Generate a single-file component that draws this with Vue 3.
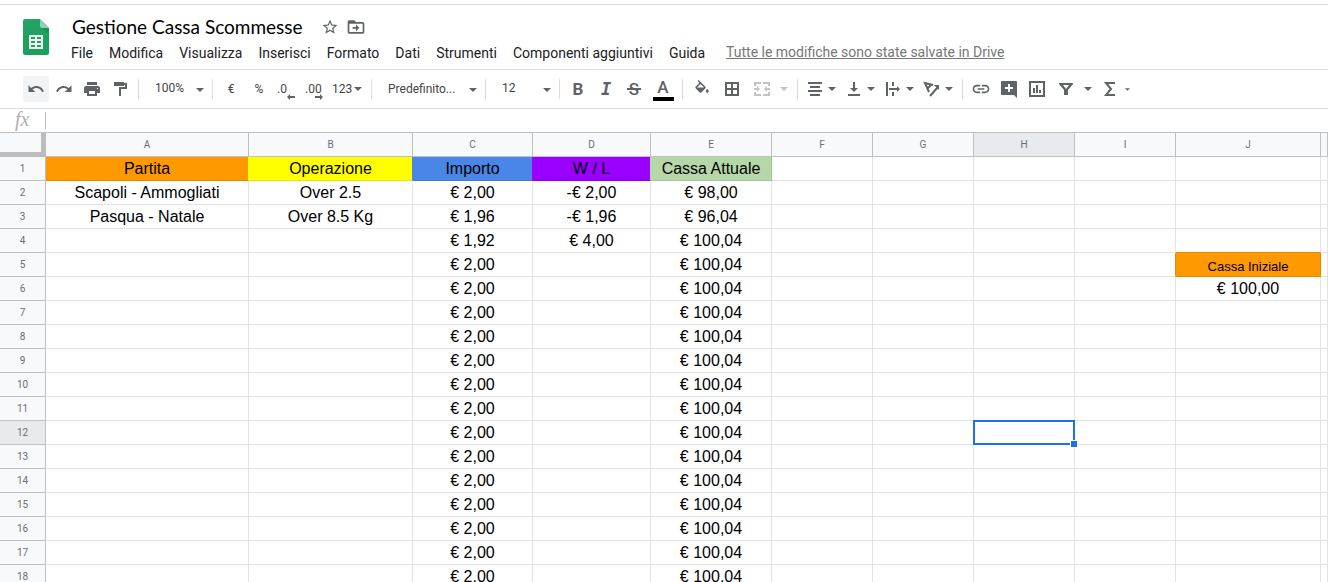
<script setup>
import { ref } from 'vue'

const title = ref('Gestione Cassa Scommesse')
const formula = ref('')
const menus = ['File', 'Modifica', 'Visualizza', 'Inserisci', 'Formato', 'Dati', 'Strumenti', 'Componenti aggiuntivi', 'Guida']
const columns = ['A', 'B', 'C', 'D', 'E', 'F', 'G', 'H', 'I', 'J', 'K']

const content = {
  A1: 'Partita', B1: 'Operazione', C1: 'Importo', D1: 'W / L', E1: 'Cassa Attuale',
  A2: 'Scapoli - Ammogliati', B2: 'Over 2.5', C2: '€ 2,00', D2: '-€ 2,00', E2: '€ 98,00',
  A3: 'Pasqua - Natale', B3: 'Over 8.5 Kg', C3: '€ 1,96', D3: '-€ 1,96', E3: '€ 96,04',
  C4: '€ 1,92', D4: '€ 4,00', E4: '€ 100,04',
  J5: 'Cassa Iniziale', J6: '€ 100,00'
}
for (let r = 5; r <= 18; r++) {
  content['C' + r] = '€ 2,00'
  content['E' + r] = '€ 100,04'
}

const fills = { A1: 'orange', B1: 'yellow', C1: 'blue', D1: 'violet', E1: 'green', J5: 'orange small boxed', J4: 'above-box', I5: 'beside-box' }
const selectedColumn = 'H'
const selectedRow = 12
</script>

<template>
  <div class="app">
    <header class="top">
      <svg class="logo" viewBox="0 0 26 36" aria-hidden="true">
        <defs>
          <linearGradient id="sheet" x1="0" y1="0" x2="0" y2="1">
            <stop offset="0" stop-color="#21a465" />
            <stop offset="1" stop-color="#1b9f5c" />
          </linearGradient>
        </defs>
        <path fill="url(#sheet)" d="M2 0h15l9 9v25a2 2 0 0 1-2 2H2a2 2 0 0 1-2-2V2a2 2 0 0 1 2-2z" />
        <path fill="#8ed1b1" d="M17 0l9 9h-7a2 2 0 0 1-2-2z" />
        <path fill="#17864b" opacity=".6" d="M18 9h8v6z" />
        <path fill="#f1f1f1" fill-rule="evenodd" d="M6 16h14v14H6zM8 18v2h4v-2zM14 18v2h4v-2zM8 22v2h4v-2zM14 22v2h4v-2zM8 26v2h4v-2zM14 26v2h4v-2z" />
      </svg>
      <div class="heading">
        <div class="title-row">
          <h1>{{ title }}</h1>
          <button class="plain" aria-label="Speciale">
            <svg class="i18" viewBox="0 0 24 24"><path d="M22 9.24l-7.19-.62L12 2 9.19 8.63 2 9.24l5.46 4.73L5.82 21 12 17.27 18.18 21l-1.63-7.03L22 9.24zM12 15.4l-3.76 2.27 1-4.28-3.32-2.88 4.38-.38L12 6.1l1.71 4.04 4.38.38-3.32 2.88 1 4.28L12 15.4z" /></svg>
          </button>
          <button class="plain" aria-label="Sposta">
            <svg class="i20" viewBox="0 0 24 24"><path d="M20 6h-8l-2-2H4c-1.100 0-2 .9-2 2v12c0 1.100.9 2 2 2h16c1.100 0 2-.9 2-2V8c0-1.100-.9-2-2-2zm0 12H4V8h16v10zM8 14h4v3l4-4-4-4v3H8z" /></svg>
          </button>
        </div>
        <nav class="menu">
          <button v-for="m in menus" :key="m">{{ m }}</button>
          <a href="#">Tutte le modifiche sono state salvate in Drive</a>
        </nav>
      </div>
    </header>

    <div class="toolbar" role="toolbar" aria-label="Strumenti">
      <button class="tool hover" aria-label="Annulla"><svg class="i18" viewBox="0 0 24 24"><path d="M12.5 8c-2.650 0-5.050.99-6.900 2.600L2 7v9h9l-3.620-3.620c1.390-1.160 3.160-1.880 5.120-1.880 3.540 0 6.550 2.310 7.600 5.500l2.370-.78C21.080 11.030 17.150 8 12.500 8z" /></svg></button>
      <button class="tool" aria-label="Ripeti"><svg class="i18" viewBox="0 0 24 24"><path d="M18.400 10.600C16.550 8.990 14.150 8 11.500 8c-4.650 0-8.580 3.030-9.960 7.220L3.900 16c1.050-3.190 4.050-5.500 7.600-5.500 1.950 0 3.730.72 5.120 1.880L13 16h9V7l-3.600 3.600z" /></svg></button>
      <button class="tool" aria-label="Stampa"><svg class="i18" viewBox="0 0 18 18"><path fill-rule="evenodd" d="M4 2h10v3H4zM3 6h12a2 2 0 0 1 2 2v5h-3v3H4v-3H1V8a2 2 0 0 1 2-2zM6 11v3h6v-3zM14 8v1h1V8z" /></svg></button>
      <button class="tool" aria-label="Copia formato"><svg class="i18" viewBox="0 0 18 18"><path d="M3 2h10v1h3v6h-6v7H8V7h6V5h-1v1H3z" /></svg></button>
      <i class="sep"></i>
      <span class="pick zoom">
        <select aria-label="Zoom"><option>100%</option></select>
        <svg class="arrow" viewBox="0 0 8 4"><path d="M0 0h8L4 4z" /></svg>
      </span>
      <i class="sep"></i>
      <button class="tool" aria-label="Valuta">€</button>
      <button class="tool" aria-label="Percentuale">%</button>
      <button class="tool decimal" aria-label="Riduci decimali">.0<svg viewBox="0 0 8 6"><path d="M0 3l3-3v2h5v2H3v2z" /></svg></button>
      <button class="tool decimal" aria-label="Aumenta decimali">.00<svg viewBox="0 0 8 6"><path d="M8 3L5 0v2H0v2h5v2z" /></svg></button>
      <button class="format">123<svg class="arrow" viewBox="0 0 8 4"><path d="M0 0h8L4 4z" /></svg></button>
      <i class="sep"></i>
      <span class="pick font">
        <select aria-label="Carattere"><option>Predefinito...</option></select>
        <svg class="arrow" viewBox="0 0 8 4"><path d="M0 0h8L4 4z" /></svg>
      </span>
      <i class="sep"></i>
      <span class="pick size">
        <select aria-label="Dimensione carattere"><option>12</option></select>
        <svg class="arrow" viewBox="0 0 8 4"><path d="M0 0h8L4 4z" /></svg>
      </span>
      <i class="sep"></i>
      <button class="tool bold" aria-label="Grassetto">B</button>
      <button class="tool italic" aria-label="Corsivo">I</button>
      <button class="tool strike" aria-label="Barrato">S</button>
      <button class="tool roomy color" aria-label="Colore testo">A</button>
      <i class="sep"></i>
      <button class="tool roomy" aria-label="Colore riempimento"><svg class="i18" viewBox="0 0 24 24"><path d="M16.560 8.940L7.620 0 6.210 1.410l2.380 2.380-5.150 5.150c-.59.59-.59 1.540 0 2.120l5.500 5.500c.29.29.68.44 1.060.44s.77-.15 1.060-.44l5.500-5.500c.59-.58.59-1.530 0-2.120zM5.210 10L10 5.210 14.790 10H5.210zM19 11.500s-2 2.170-2 3.500c0 1.100.9 2 2 2s2-.9 2-2c0-1.330-2-3.500-2-3.500z" /></svg></button>
      <button class="tool roomy" aria-label="Bordi"><svg class="i18" viewBox="0 0 18 18"><path fill-rule="evenodd" d="M2 2h14v14H2zM4 4v4h4V4zM10 4v4h4V4zM4 10v4h4v-4zM10 10v4h4v-4z" /></svg></button>
      <button class="split wide" disabled aria-label="Unisci celle">
        <svg class="i18" viewBox="0 0 18 18"><path d="M1 2h7v2H3v2H1zM10 2h7v4h-2V4h-5zM1 12h2v2h5v2H1zM15 12h2v4h-7v-2h5zM1 8h3V6l3 3-3 3v-2H1zM17 8h-3V6l-3 3 3 3v-2h3z" /></svg>
        <svg class="arrow" viewBox="0 0 8 4"><path d="M0 0h8L4 4z" /></svg>
      </button>
      <i class="sep"></i>
      <button class="split" aria-label="Allineamento orizzontale">
        <svg class="i18" viewBox="0 0 18 18"><path d="M2 2h14v2H2zM4 6h10v2H4zM2 10h14v2H2zM4 14h10v2H4z" /></svg>
        <svg class="arrow" viewBox="0 0 8 4"><path d="M0 0h8L4 4z" /></svg>
      </button>
      <button class="split" aria-label="Allineamento verticale">
        <svg class="i18" viewBox="0 0 18 18"><path d="M8 2h2v6h3l-4 4-4-4h3zM3 14h12v2H3z" /></svg>
        <svg class="arrow" viewBox="0 0 8 4"><path d="M0 0h8L4 4z" /></svg>
      </button>
      <button class="split" aria-label="Testo a capo">
        <svg class="i18" viewBox="0 0 18 18"><path d="M2 2h2v14H2zM8 2h2v4H8zM8 12h2v4H8zM5 8h8V6l3 3-3 3v-2H5z" /></svg>
        <svg class="arrow" viewBox="0 0 8 4"><path d="M0 0h8L4 4z" /></svg>
      </button>
      <button class="split" aria-label="Rotazione testo">
        <svg class="i18" viewBox="0 0 18 18"><path class="line" d="M10 5L2 3l4 9M8 5L5 8M7 16l8-9" /><path d="M11 5h5v5z" /></svg>
        <svg class="arrow" viewBox="0 0 8 4"><path d="M0 0h8L4 4z" /></svg>
      </button>
      <i class="sep"></i>
      <button class="tool" aria-label="Inserisci link"><svg class="i20" viewBox="0 0 24 24"><path d="M3.900 12c0-1.710 1.390-3.100 3.100-3.100h4V7H7c-2.760 0-5 2.240-5 5s2.240 5 5 5h4v-1.900H7c-1.710 0-3.100-1.390-3.100-3.100zM8 13h8v-2H8v2zm9-6h-4v1.900h4c1.710 0 3.100 1.390 3.100 3.100s-1.390 3.100-3.100 3.100h-4V17h4c2.760 0 5-2.240 5-5s-2.240-5-5-5z" /></svg></button>
      <button class="tool" aria-label="Inserisci commento"><svg class="i18" viewBox="0 0 18 18"><path fill-rule="evenodd" d="M2 1h14a1 1 0 0 1 1 1v16l-3-3H2a1 1 0 0 1-1-1V2a1 1 0 0 1 1-1zM8 4v3H5v2h3v3h2V9h3V7h-3V4z" /></svg></button>
      <button class="tool" aria-label="Inserisci grafico"><svg class="i18" viewBox="0 0 18 18"><path fill-rule="evenodd" d="M1 1h16v16H1zM3 3v12h12V3zM5 8h2v5H5zM8 5h2v8H8zM11 10h2v3h-2z" /></svg></button>
      <button class="split wide" aria-label="Filtro">
        <svg class="i18" viewBox="0 0 18 18"><path fill-rule="evenodd" d="M2 3h14v1l-5 6v5H7v-5L2 4zM6 5l3 4 3-4z" /></svg>
        <svg class="arrow" viewBox="0 0 8 4"><path d="M0 0h8L4 4z" /></svg>
      </button>
      <button class="split sum" aria-label="Funzioni">
        <svg class="i18" viewBox="0 0 18 18"><path class="line" d="M14 3H5l5 6-5 6h9" /></svg>
        <svg class="arrow tiny" viewBox="0 0 8 4"><path d="M0 0h8L4 4z" /></svg>
      </button>
    </div>

    <div class="formula">
      <label for="formula">fx</label>
      <input id="formula" v-model="formula" type="text" />
    </div>

    <main class="grid">
      <table>
        <colgroup>
          <col class="c-head" />
          <col v-for="c in columns" :key="c" :class="'c-' + c" />
        </colgroup>
        <thead>
          <tr>
            <th class="corner"></th>
            <th v-for="c in columns" :key="c" scope="col" :class="{ active: c === selectedColumn }">{{ c === 'K' ? '' : c }}</th>
          </tr>
        </thead>
        <tbody>
          <tr v-for="r in 18" :key="r">
            <th scope="row" :class="{ active: r === selectedRow }">{{ r }}</th>
            <td v-for="c in columns" :key="c" :class="fills[c + r]">
              {{ content[c + r] }}
              <div v-if="c === selectedColumn && r === selectedRow" class="selection"><i></i></div>
            </td>
          </tr>
        </tbody>
      </table>
    </main>
  </div>
</template>

<style>
html, body { margin: 0; background: #fff; }
</style>

<style scoped>
.app { height: 100vh; overflow: hidden; display: flex; flex-direction: column; font-family: Roboto, "Liberation Sans", sans-serif; color: #202124; background: #fff; }
.app * { box-sizing: border-box; }
button { border: 0; background: none; padding: 0; margin: 0; font: inherit; color: inherit; white-space: nowrap; flex: none; }
svg { display: block; flex: none; fill: #5f6368; }
.i18 { width: 18px; height: 18px; }
.i20 { width: 20px; height: 20px; }
.line { fill: none; stroke: #5f6368; stroke-width: 2; }

.top { margin-top: 4px; height: 66px; flex: none; border-top: 1px solid #dadce0; border-bottom: 1px solid #dadce0; display: flex; padding-left: 23px; }
.logo { width: 26px; height: 36px; margin-top: 14px; }
.heading { padding: 10px 0 0 22px; }
.title-row { display: flex; align-items: center; height: 24px; padding-left: 1px; }
h1 { margin: 0 18px 0 0; font: 400 19px/24px Lato, "Open Sans", sans-serif; color: #000; white-space: nowrap; }
.plain + .plain { margin-left: 7px; }
.menu { display: flex; align-items: center; height: 28px; gap: 16px; font-size: 14px; white-space: nowrap; }
.menu a { margin-left: 5px; padding-bottom: 2px; color: #777; }

.toolbar { height: 39px; flex: none; display: flex; align-items: center; padding-left: 22px; border-bottom: 1px solid #dadce0; font-size: 12px; color: #444; }
.tool { width: 26px; height: 26px; margin: 0 1px; border-radius: 2px; display: flex; align-items: center; justify-content: center; position: relative; }
.tool.hover { background: #f1f3f4; }
.tool.roomy { margin: 0 2px; }
.sep { width: 1px; height: 20px; margin: 0 4px; background: #dadce0; flex: none; }
.arrow { width: 8px; height: 4px; }
.arrow.tiny { width: 5px; height: 3px; }
.pick { position: relative; flex: none; height: 26px; }
.pick .arrow { position: absolute; right: 4px; top: 12px; pointer-events: none; }
select { appearance: none; width: 100%; height: 26px; border: 0; background: none; font: inherit; color: inherit; padding: 0 0 0 12px; outline: 0; }
.zoom, .size { width: 65px; }
.zoom select, .size select { padding-bottom: 2px; }
.font { width: 105px; }
.format { width: 38px; height: 26px; padding-left: 3px; display: flex; align-items: center; gap: 2px; }
.decimal { justify-content: flex-start; padding-left: 3px; }
.decimal svg { position: absolute; right: 5px; bottom: 2px; width: 8px; height: 6px; }
.bold, .italic, .strike, .color { color: #5f6368; font-size: 17px; }
.bold { font-weight: 700; }
.italic { font-family: "DejaVu Sans Mono", monospace; font-weight: 700; font-style: italic; }
.strike { font-weight: 500; }
.strike::after { content: ""; position: absolute; left: 6px; right: 6px; top: 12px; height: 2px; background: #5f6368; }
.color { padding-bottom: 4px; font-weight: 500; }
.color::after { content: ""; position: absolute; left: 3px; right: 2px; bottom: 1px; height: 4px; background: #000; }
.split { width: 39px; height: 26px; padding-left: 4px; display: flex; align-items: center; gap: 4px; }
.split.wide { width: 46px; padding-left: 6px; gap: 9px; }
.split.sum { gap: 6px; }
.split:disabled svg { fill: #c4c4c4; }

.formula { height: 24px; flex: none; display: flex; align-items: center; border-bottom: 1px solid #c0c0c0; }
.formula label { width: 45px; padding: 0 0 3px 15px; font: italic 20px/20px "Liberation Serif", serif; color: #b0b0b0; }
.formula input { flex: 1; height: 17px; border: 0; border-left: 1px solid #c0c0c0; outline: 0; padding: 0 6px; font: 13px "Liberation Sans", sans-serif; }

.grid { flex: 1; min-height: 0; overflow: hidden; }
table { width: 100%; table-layout: fixed; border-collapse: separate; border-spacing: 0; }
.c-head { width: 46px; }
.c-A { width: 203px; }
.c-B { width: 164px; }
.c-C { width: 120px; }
.c-D { width: 118px; }
.c-E { width: 121px; }
.c-F, .c-G, .c-H, .c-I { width: 101px; }
.c-J { width: 145px; }
th { height: 24px; padding: 0; font: 400 10px/23px Roboto, sans-serif; color: #6b6f73; background: #f8f9fa; border-right: 1px solid #c0c0c0; border-bottom: 1px solid #c0c0c0; text-align: center; }
th.active { background: #e8eaed; }
th.corner { border-right: 5px solid #bcbcbc; border-bottom: 5px solid #bcbcbc; }
td { position: relative; height: 24px; padding: 0; font: 16px/23px "Liberation Sans", Arial, sans-serif; color: #000; text-align: center; white-space: nowrap; border-right: 1px solid #e2e3e3; border-bottom: 1px solid #e2e3e3; }
td.orange { background: #ff9900; border-color: #ffff00; border-bottom-color: #e68a00; }
td.yellow { background: #ffff00; border-color: #4a86e8; border-bottom-color: #e6e600; }
td.blue { background: #4a86e8; border-color: #9900ff; border-bottom-color: #4379d1; }
td.violet { background: #9900ff; border-color: #b6d7a8; border-bottom-color: #8a00e6; }
td.green { background: #b6d7a8; border-color: #a4c297; }
td.boxed { border-color: #e68a00; }
td.small { font-size: 13px; padding-top: 4px; line-height: 19px; }
td.above-box { border-bottom-color: #e68a00; }
td.beside-box { border-right-color: #e68a00; }
.selection { position: absolute; inset: -1px; z-index: 1; border: 2px solid #1a73e8; }
.selection i { position: absolute; right: -5px; bottom: -5px; width: 8px; height: 8px; background: #1a73e8; border: 1px solid #fff; }
</style>
